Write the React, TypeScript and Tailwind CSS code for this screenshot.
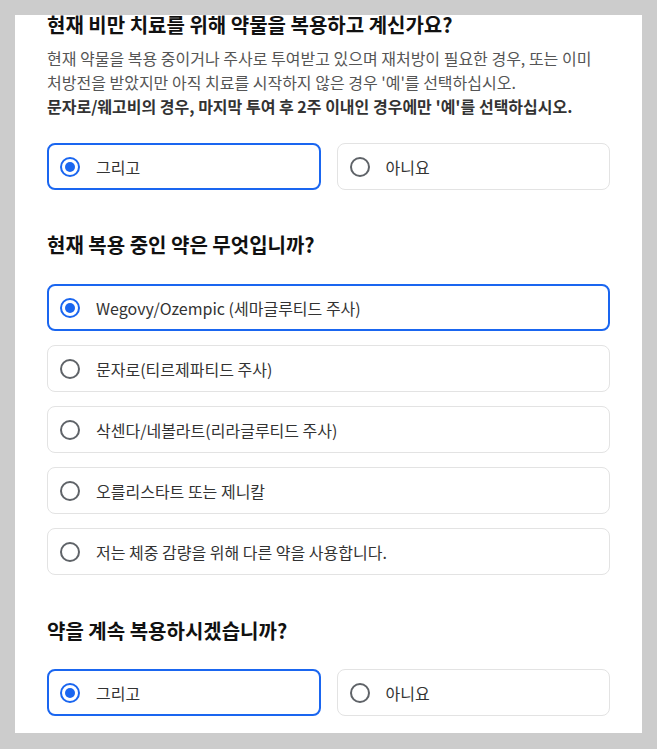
import React from "react";

const font = { fontFamily: '"Noto Sans CJK KR", "Noto Sans", sans-serif' };

function Radio({ checked }: { checked: boolean }) {
  return (
    <svg width="20" height="20" viewBox="0 0 20 20" className="shrink-0">
      <circle cx="10" cy="10" r="9" fill="none" stroke={checked ? "#1a66f0" : "#5f6368"} strokeWidth="2" />
      {checked && <circle cx="10" cy="10" r="5" fill="#1a66f0" />}
    </svg>
  );
}

function Option({ label, checked }: { label: string; checked: boolean }) {
  return (
    <div
      className={
        checked
          ? "flex h-[47px] items-center gap-4 rounded-lg border-2 border-[#1a66f0] bg-white pl-[11px]"
          : "flex h-[47px] items-center gap-4 rounded-lg border border-[#e3e3e3] bg-white pl-[12px]"
      }
    >
      <Radio checked={checked} />
      <span className="text-[16px] leading-6 text-[#333333]">{label}</span>
    </div>
  );
}

export default function App() {
  return (
    <div className="min-h-screen bg-[#cccccc] px-[15px] pt-[15px]" style={font}>
      <div className="bg-white px-8 pb-[17px]">
        <h2 className="text-[20px] font-bold leading-5 text-[#111111]">현재 비만 치료를 위해 약물을 복용하고 계신가요?</h2>
        <p className="mt-[11px] break-keep text-[16px] leading-6 text-[#555555]">
          현재 약물을 복용 중이거나 주사로 투여받고 있으며 재처방이 필요한 경우, 또는 이미 처방전을 받았지만 아직 치료를 시작하지 않은 경우 '예'를 선택하십시오.
          <br />
          <strong className="font-bold text-[#333333]">문자로/웨고비의 경우, 마지막 투여 후 2주 이내인 경우에만 '예'를 선택하십시오.</strong>
        </p>
        <div className="mt-[25px] grid grid-cols-2 gap-4">
          <Option label="그리고" checked />
          <Option label="아니요" checked={false} />
        </div>

        <h2 className="mt-[41px] text-[20px] font-bold leading-7 text-[#111111]">현재 복용 중인 약은 무엇입니까?</h2>
        <div className="mt-[25px] flex flex-col gap-[14px]">
          <Option label="Wegovy/Ozempic (세마글루티드 주사)" checked />
          <Option label="문자로(티르제파티드 주사)" checked={false} />
          <Option label="삭센다/네볼라트(리라글루티드 주사)" checked={false} />
          <Option label="오를리스타트 또는 제니칼" checked={false} />
          <Option label="저는 체중 감량을 위해 다른 약을 사용합니다." checked={false} />
        </div>

        <h2 className="mt-[42px] text-[20px] font-bold leading-7 text-[#111111]">약을 계속 복용하시겠습니까?</h2>
        <div className="mt-6 grid grid-cols-2 gap-4">
          <Option label="그리고" checked />
          <Option label="아니요" checked={false} />
        </div>
      </div>
    </div>
  );
}
